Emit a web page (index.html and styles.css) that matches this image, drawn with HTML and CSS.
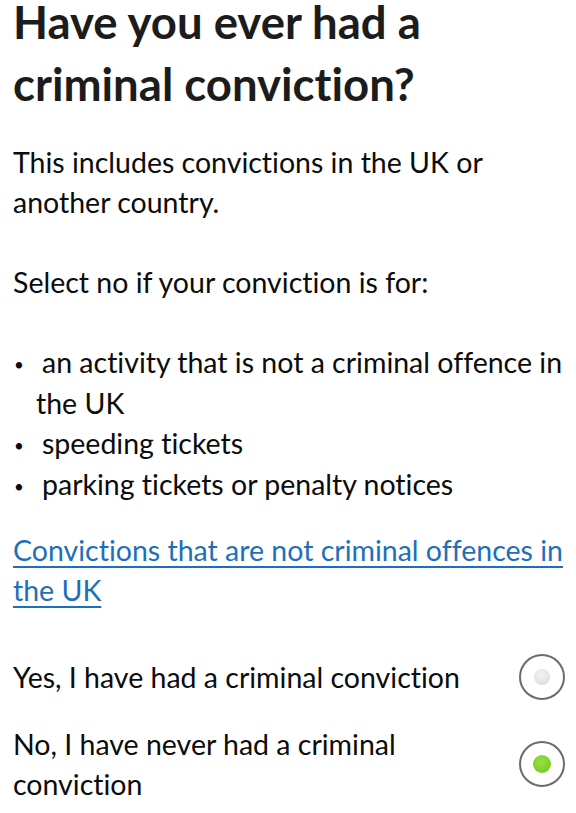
FILE: index.html
```html
<!DOCTYPE html>
<html lang="en">
<head>
  <meta charset="UTF-8" />
  <meta name="viewport" content="width=device-width, initial-scale=1.0"/>
  <title>Criminal convictions</title>
  <link rel="stylesheet" href="styles.css">
</head>
<body>

  <main class="page">
    <h1 class="question">Have you ever had a criminal conviction?</h1>

    <p class="hint">This includes convictions in the UK or another country.</p>

    <p class="hint">Select no if your conviction is for:</p>

    <ul class="bullets">
      <li>an activity that is not a criminal offence in the UK</li>
      <li>speeding tickets</li>
      <li>parking tickets or penalty notices</li>
    </ul>

    <a class="help-link" href="#">Convictions that are not criminal offences in the UK</a>

    <div class="options">
      <label class="option">
        <span class="option-text">Yes, I have had a criminal conviction</span>
        <input type="radio" name="conviction" value="yes">
        <span class="radio"></span>
      </label>
      <label class="option">
        <span class="option-text">No, I have never had a criminal conviction</span>
        <input type="radio" name="conviction" value="no" checked>
        <span class="radio"></span>
      </label>
    </div>
  </main>

</body>
</html>
```

FILE: styles.css
```css
* {
  box-sizing: border-box;
  margin: 0;
  padding: 0;
}

body {
  font-family: Lato, 'Noto Sans', sans-serif;
  font-variant-ligatures: none;
  background: #fff;
  color: #0b0c0c;
  overflow: hidden;
}

.page {
  padding: 0 11px 0 13px;
}

.question {
  font-size: 45.5px;
  font-weight: 700;
  line-height: 62px;
  margin-top: -9px;
  margin-bottom: 27px;
  color: #1c1c1c;
  max-width: 480px;
}

.hint {
  font-size: 28.5px;
  line-height: 40px;
  margin-bottom: 40px;
}

.bullets {
  list-style: none;
  font-size: 28.5px;
  line-height: 40.7px;
  margin-bottom: 25px;
}

.bullets li {
  padding-left: 23px;
  text-indent: -23px;
}

.bullets li::before {
  content: "•";
  display: inline-block;
  width: 28px;
  text-indent: 0;
  padding-left: 1px;
  font-size: 17px;
  line-height: 0;
  vertical-align: 2px;
}

.help-link {
  display: block;
  font-size: 28.5px;
  line-height: 40px;
  color: #1d70b8;
  text-decoration: underline;
  text-decoration-thickness: 2px;
  text-underline-offset: 5px;
  margin-bottom: 44px;
}

.options {
  display: flex;
  flex-direction: column;
  gap: 24px;
}

.option {
  display: flex;
  align-items: center;
  gap: 20px;
  font-size: 28.5px;
  line-height: 40px;
}

.option-text {
  flex: 1;
}

.option input {
  display: none;
}

.radio {
  width: 46px;
  height: 46px;
  border: 2px solid #6b6b6b;
  border-radius: 50%;
  display: flex;
  align-items: center;
  justify-content: center;
  flex-shrink: 0;
}

.radio::after {
  content: "";
  width: 16px;
  height: 16px;
  border-radius: 50%;
  background: radial-gradient(circle at 45% 40%, #f4f4f4, #d8d8d8);
}

.option input:checked + .radio::after {
  width: 18px;
  height: 18px;
  background: radial-gradient(circle at 45% 40%, #9be044, #6cc51c);
}
```
